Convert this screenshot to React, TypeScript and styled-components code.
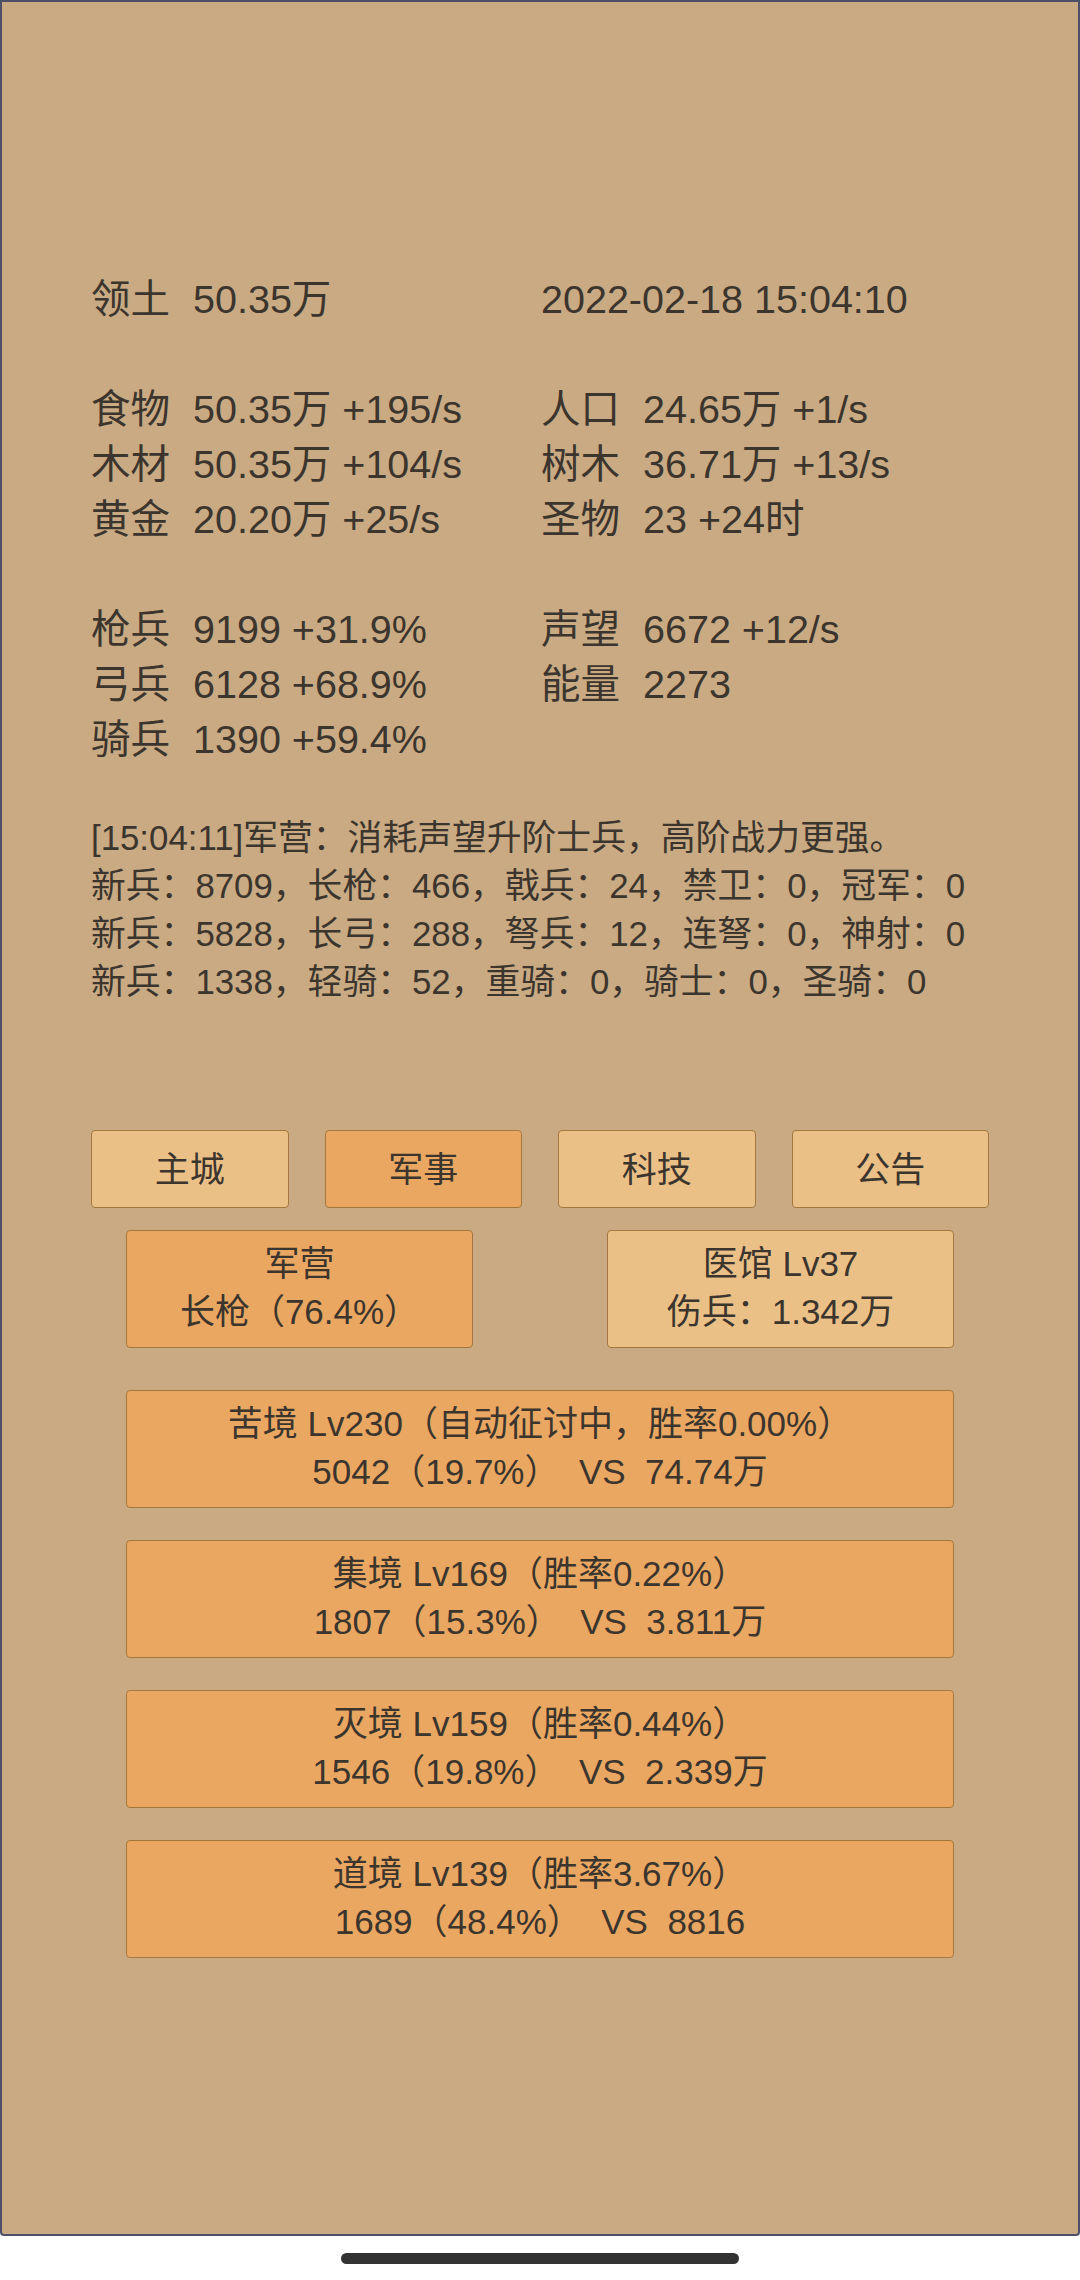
import React from "react";
import styled, { createGlobalStyle } from "styled-components";

const GlobalStyle = createGlobalStyle`
  html, body {
    margin: 0;
    padding: 0;
    background: #ffffff;
  }
  body {
    font-family: "Liberation Sans", "Noto Sans CJK SC", sans-serif;
    color: #3b352e;
  }
`;

const Page = styled.div`
  width: 1080px;
  height: 2280px;
  display: flex;
  flex-direction: column;
  background: #ffffff;
`;

const Panel = styled.main`
  box-sizing: border-box;
  height: 2236px;
  background: #c9aa83;
  border: 2px solid #4c5066;
  border-radius: 0 0 4px 4px;
  padding: 270px 89px 0;
  display: flex;
  flex-direction: column;
`;

const StatGroup = styled.section<{ $gap?: number }>`
  display: grid;
  grid-template-columns: 450px 1fr;
  font-size: 39.5px;
  line-height: 55px;
  margin-top: ${(p) => p.$gap ?? 0}px;
`;

const Stat = styled.div`
  display: flex;
  white-space: pre;
`;

const Label = styled.span`
  margin-right: 23px;
`;

const Value = styled.span``;

const Log = styled.div`
  margin-top: 47px;
  font-size: 34.8px;
  line-height: 48px;
`;

const Tabs = styled.nav`
  margin-top: 124px;
  display: grid;
  grid-template-columns: repeat(4, 1fr);
  column-gap: 36px;
`;

const Tab = styled.div<{ $active?: boolean }>`
  box-sizing: border-box;
  height: 78px;
  padding-bottom: 5px;
  display: flex;
  align-items: center;
  justify-content: center;
  font-size: 35px;
  background: ${(p) => (p.$active ? "#eaa761" : "#ebc087")};
  border: 1.5px solid #a4773f;
  border-radius: 4px;
`;

const BuildingRow = styled.div`
  margin-top: 22px;
  padding: 0 35px;
  display: flex;
  justify-content: space-between;
`;

const Card = styled.div<{ $light?: boolean; $wide?: boolean }>`
  box-sizing: border-box;
  width: ${(p) => (p.$wide ? "100%" : "347px")};
  height: 118px;
  padding: 9px 8px 11px;
  font-size: 35px;
  line-height: 48px;
  text-align: center;
  white-space: pre;
  background: ${(p) => (p.$light ? "#ebc087" : "#eaa761")};
  border: 1.5px solid #a4773f;
  border-radius: 4px;
`;

const CampaignList = styled.div`
  margin-top: 42px;
  padding: 0 35px;
  display: flex;
  flex-direction: column;
  gap: 32px;
`;

const BottomBar = styled.div`
  flex: 1;
  display: flex;
  justify-content: center;
  padding-top: 17px;
`;

const HomeIndicator = styled.div`
  width: 398px;
  height: 11px;
  border-radius: 6px;
  background: #333333;
`;

type StatItem = { label: string; value: string } | null;

const groups: StatItem[][] = [
  [
    { label: "领土", value: "50.35万" },
    { label: "", value: "2022-02-18 15:04:10" },
  ],
  [
    { label: "食物", value: "50.35万 +195/s" },
    { label: "人口", value: "24.65万 +1/s" },
    { label: "木材", value: "50.35万 +104/s" },
    { label: "树木", value: "36.71万 +13/s" },
    { label: "黄金", value: "20.20万 +25/s" },
    { label: "圣物", value: "23 +24时" },
  ],
  [
    { label: "枪兵", value: "9199 +31.9%" },
    { label: "声望", value: "6672 +12/s" },
    { label: "弓兵", value: "6128 +68.9%" },
    { label: "能量", value: "2273" },
    { label: "骑兵", value: "1390 +59.4%" },
    null,
  ],
];

const logLines = [
  "[15:04:11]军营：消耗声望升阶士兵，高阶战力更强。",
  "新兵：8709，长枪：466，戟兵：24，禁卫：0，冠军：0",
  "新兵：5828，长弓：288，弩兵：12，连弩：0，神射：0",
  "新兵：1338，轻骑：52，重骑：0，骑士：0，圣骑：0",
];

const tabs = ["主城", "军事", "科技", "公告"];

const campaigns = [
  ["苦境 Lv230（自动征讨中，胜率0.00%）", "5042（19.7%）  VS  74.74万"],
  ["集境 Lv169（胜率0.22%）", "1807（15.3%）  VS  3.811万"],
  ["灭境 Lv159（胜率0.44%）", "1546（19.8%）  VS  2.339万"],
  ["道境 Lv139（胜率3.67%）", "1689（48.4%）  VS  8816"],
];

export default function App() {
  return (
    <>
      <GlobalStyle />
      <Page>
        <Panel>
          {groups.map((g, gi) => (
            <StatGroup key={gi} $gap={gi === 0 ? 0 : 55}>
              {g.map((s, si) =>
                s ? (
                  <Stat key={si}>
                    {s.label && <Label>{s.label}</Label>}
                    <Value>{s.value}</Value>
                  </Stat>
                ) : (
                  <Stat key={si} />
                )
              )}
            </StatGroup>
          ))}
          <Log>
            {logLines.map((l, i) => (
              <div key={i}>{l}</div>
            ))}
          </Log>
          <Tabs>
            {tabs.map((t, i) => (
              <Tab key={t} $active={i === 1}>
                {t}
              </Tab>
            ))}
          </Tabs>
          <BuildingRow>
            <Card>{"军营\n长枪（76.4%）"}</Card>
            <Card $light>{"医馆 Lv37\n伤兵：1.342万"}</Card>
          </BuildingRow>
          <CampaignList>
            {campaigns.map(([a, b]) => (
              <Card key={a} $wide>
                {a + "\n" + b}
              </Card>
            ))}
          </CampaignList>
        </Panel>
        <BottomBar>
          <HomeIndicator />
        </BottomBar>
      </Page>
    </>
  );
}
